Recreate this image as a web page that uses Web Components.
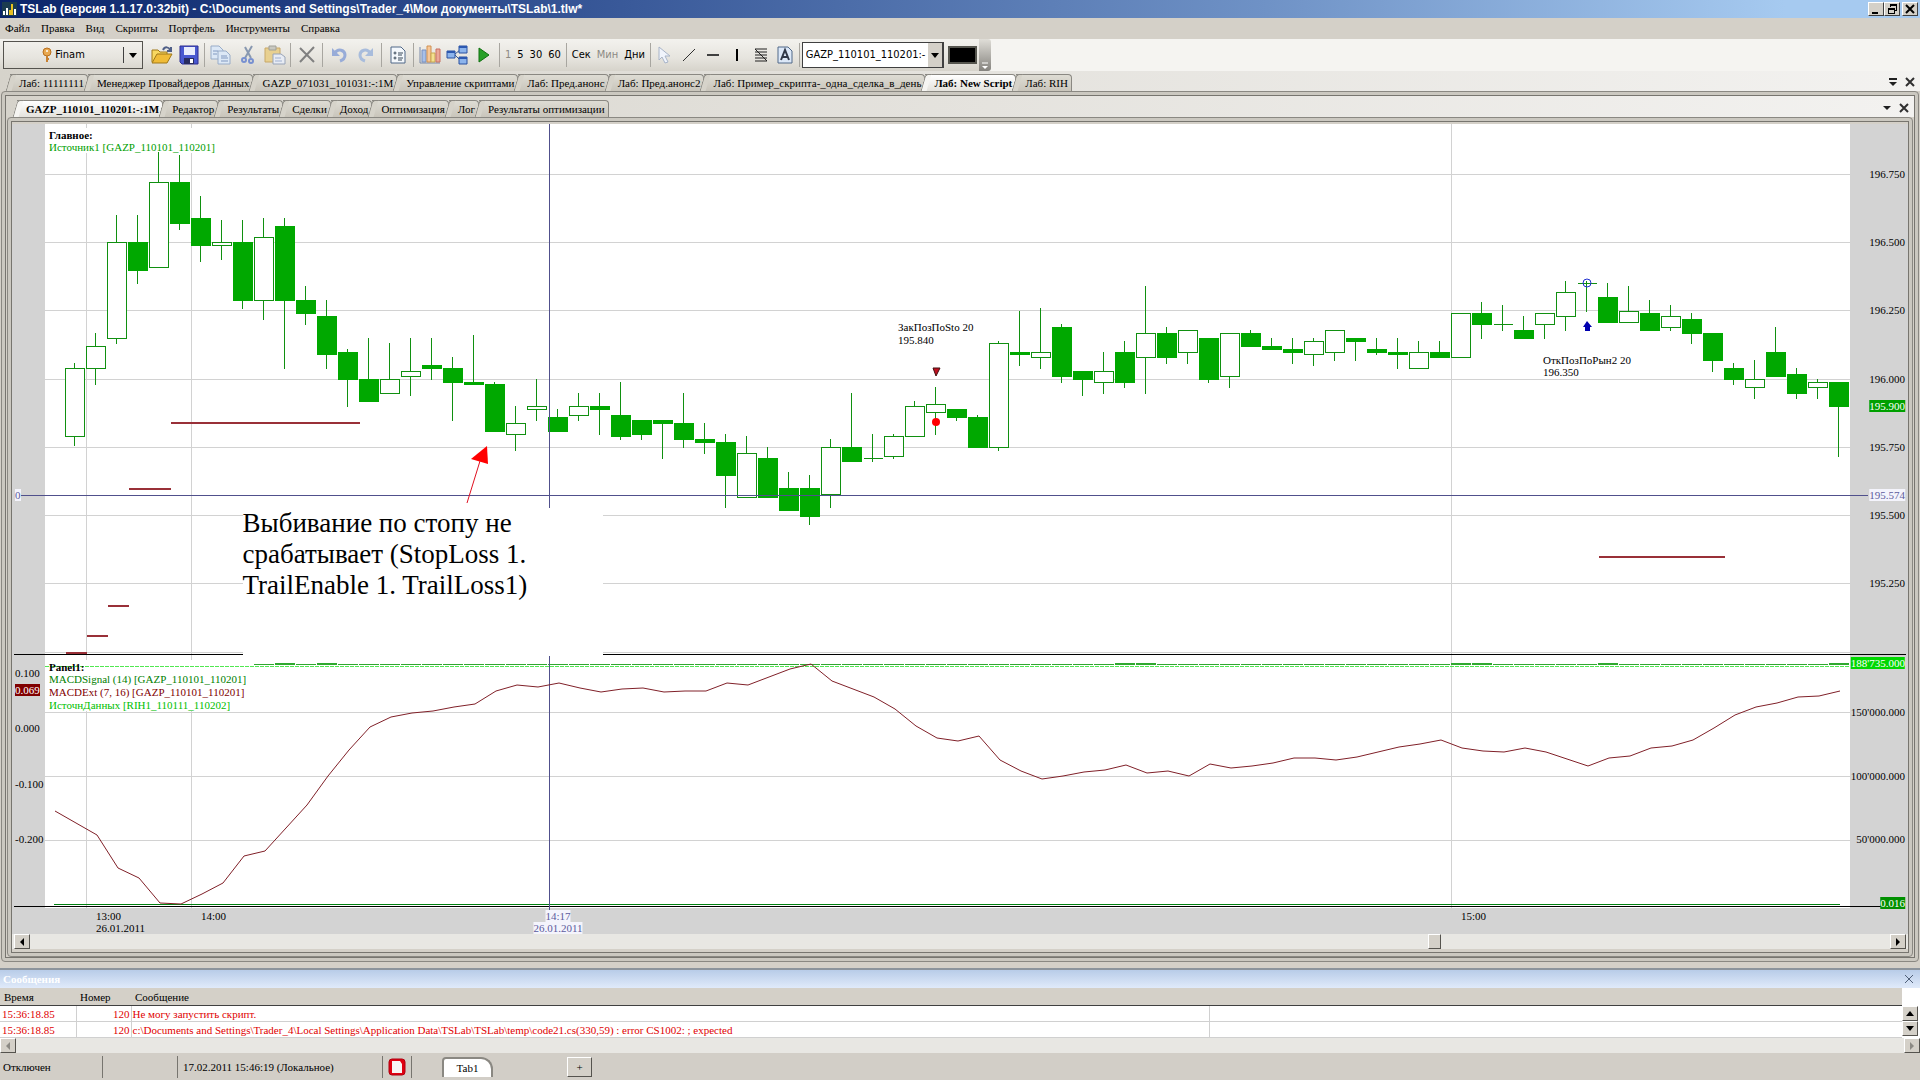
<!DOCTYPE html>
<html lang="ru">
<head>
<meta charset="utf-8">
<title>TSLab</title>
<style>
	html, body {
		margin: 0;
		height: 100%;
	}
	body {
		font-family: "Liberation Serif", serif;
		font-size:   11px;
		line-height: 12px;
		color:       #000;
		--face:      #d4d0c8;
		--line:      #8a8882;
		--ui:        "DejaVu Sans Condensed", "DejaVu Sans", sans-serif;
	}
</style>
</head>
<body>
<ts-app></ts-app>

<script>
(function ()
{
	function define( name, render )
	{
		customElements.define( name, class extends HTMLElement
		{
			constructor()
			{
				super();

				this.attachShadow({ mode: 'open' });
			}

			connectedCallback()
			{
				this.shadowRoot.innerHTML = render( this );
			}
		});
	}

	/* ---- title bar ---- */

	define( 'ts-title-bar', () =>
	`
	<style>
		:host {
			display:     flex;
			align-items: center;
			height:      18px;
			padding:     0 2px;
			background:  linear-gradient( 90deg, #0a246a 0, #3a5a9a 33%, #6f92c6 66%, #a6caf0 93% );
			color:       #fff;
			font:        bold 12px/18px "Liberation Sans", sans-serif;
		}
		h1 {
			flex:        1;
			margin:      0 0 0 3px;
			font:        inherit;
			white-space: nowrap;
		}
		button {
			width:      16px;
			height:     14px;
			padding:    0;
			border:     1px solid;
			border-color: #fff #404040 #404040 #fff;
			background: var( --face );
		}
		button:last-child { margin-left: 2px; }
		svg { display: block; }
	</style>
	<svg width="15" height="14" shape-rendering="crispEdges">
		<rect width="15" height="14" fill="#1c3c50"/>
		<path d="M2 9v4M5 6v7M13 7v6" stroke="#fff" stroke-width="2"/>
		<path d="M8 8v5M10 2v11" stroke="#e8c020" stroke-width="2"/>
	</svg>
	<h1><slot></slot></h1>
	<button aria-label="Свернуть"><svg width="14" height="12"><path d="M3 9h6v2H3z"/></svg></button>
	<button aria-label="Восстановить"><svg width="14" height="12" fill="none" stroke="#000" shape-rendering="crispEdges"><path d="M5 4V1h6v6H9M5 2h6M3 5h6v5H3zM3 6h6"/></svg></button>
	<button aria-label="Закрыть"><svg width="14" height="12"><path d="M3 2l8 8M11 2l-8 8" stroke="#000" stroke-width="2"/></svg></button>
	` );

	/* ---- menu bar ---- */

	define( 'ts-menu-bar', () =>
	`
	<style>
		:host { display: block; background: var( --face ); }
		nav {
			display:     flex;
			gap:         11px;
			height:      19px;
			padding:     0 5px 2px;
			align-items: center;
		}
		a { color: #000; text-decoration: none; white-space: nowrap; }
	</style>
	<nav>
		${ [ 'Файл', 'Правка', 'Вид', 'Скрипты', 'Портфель', 'Инструменты', 'Справка' ]
			.map( item => `<a href="#">${ item }</a>` ).join( '' ) }
	</nav>
	` );

	/* ---- toolbar ---- */

	const icons =
	{
		key:    [ 10, 16, '<circle cx="5" cy="5" r="4" fill="#e8a850" stroke="#b87020"/><circle cx="5" cy="4" r="1" fill="#fff"/><path d="M5 9v6M5 12h2" stroke="#c88030" stroke-width="2"/>' ],
		open:   [ 22, 20, '<path d="M1 17V5h6l2 2h7v3" fill="#f8d860" stroke="#a07818"/><path d="M1 18L6 9h15l-5 9z" fill="#f0bc38" stroke="#a07818"/><path d="M12 5c2-4 6-3 7 0M20 2v4h-4" fill="none" stroke="#506088" stroke-width="2"/>' ],
		save:   [ 20, 20, '<path d="M1 1h18v18H3l-2-2z" fill="#4858d0" stroke="#2c2c90"/><path d="M5 2h11v8H5z" fill="#e8ecfc"/><path d="M5 13h10v6H5z" fill="#282c60"/><path d="M11 14h3v4h-3z" fill="#fff"/>' ],
		copy:   [ 22, 20, '<g stroke="#98acc8" fill="#dce8f6"><path d="M1 1h8l4 4v9H1z"/><path d="M8 6h8l4 4v9H8z"/></g><path d="M3 6h5M3 9h4M11 11h6M11 13h7M11 16h7" stroke="#8098c0"/>' ],
		cut:    [ 16, 20, '<path d="M12 1L5 13M5 2l6 11" stroke="#8898b0" stroke-width="2"/><g fill="none" stroke="#7890d0" stroke-width="2"><circle cx="4" cy="15" r="2"/><circle cx="11" cy="16" r="2"/></g>' ],
		paste:  [ 22, 20, '<path d="M1 3h15v14H1z" fill="#e8d090" stroke="#c8a868"/><path d="M5 1h7v4H5z" fill="#c8c8c0" stroke="#a0a098"/><path d="M9 9h8l4 3v7H9z" fill="#e8ecf4" stroke="#98a4b8"/><path d="M11 13h6M11 16h7" stroke="#a0b0d0"/>' ],
		remove: [ 18, 18, '<path d="M2 2l14 14M16 1L2 16" stroke="#808080" stroke-width="2"/>' ],
		undo:   [ 18, 16, '<path d="M2 1v8h8z" fill="#98acd8"/><path d="M5 6c3-5 10-3 10 2 0 3-2 5-5 6" fill="none" stroke="#98acd8" stroke-width="3"/>' ],
		redo:   [ 18, 16, '<path d="M16 1v8H8z" fill="#a8bcdc"/><path d="M13 6C10 1 3 3 3 8c0 3 2 5 5 6" fill="none" stroke="#a8bcdc" stroke-width="3"/>' ],
		props:  [ 16, 18, '<path d="M1 1h10l4 4v12H1z" fill="#f4f8fc" stroke="#506888"/><g fill="none" stroke="#384858"><circle cx="5" cy="7" r="1"/><circle cx="5" cy="12" r="1"/><path d="M8 7h5M8 12h5M8 9h4M8 14h4"/></g>' ],
		bars:   [ 22, 20, '<path d="M1 2v16h20" fill="none" stroke="#7888a8"/><path d="M3 5h4v12H3z" fill="#a8c0e8" stroke="#7890c0"/><path d="M8 1h4v16H8z" fill="#f8c898" stroke="#d09050"/><path d="M12 8h4v9h-4z" fill="#f4e090" stroke="#c8a850"/><path d="M17 4h4v13h-4z" fill="#eca898" stroke="#c87060"/>' ],
		flow:   [ 22, 20, '<path d="M9 9l5-4M9 10l5 5" stroke="#385890"/><g fill="#8cb4ec" stroke="#2850a0"><path d="M1 6h8v7H1zM13 1h8v7h-8zM13 12h8v7h-8z"/></g><path d="M1 7h8M13 2h8M13 13h8" stroke="#2c58b0" stroke-width="2"/>' ],
		play:   [ 12, 16, '<path d="M1 1l10 7-10 7z" fill="#28a028" stroke="#107010"/>' ],
		cursor: [ 14, 18, '<path d="M1 1v13l3-3 3 6 3-1-3-6h5z" fill="#f0f4fc" stroke="#a8b4c8"/>' ],
		line:   [ 14, 14, '<path d="M1 13L13 1" stroke="#303030"/>' ],
		horiz:  [ 14, 14, '<path d="M1 7h12" stroke="#404040" stroke-width="2"/>' ],
		vert:   [ 4, 14, '<path d="M2 1v12" stroke="#000" stroke-width="2"/>' ],
		fibo:   [ 14, 16, '<path d="M1 2h12M1 5h12M1 8h12M1 11h12M1 14h12M1 2l12 12" stroke="#202020"/>' ],
		text:   [ 16, 18, '<path d="M1 1h10l4 4v12H1z" fill="#dce8f8" stroke="#506888"/><path d="M4 14L8 4l4 10M5 11h6" fill="none" stroke="#303848" stroke-width="2"/>' ],
	};

	function insertIcon( name )
	{
		const [ width, height, shapes ] = icons[ name ];

		return `<svg width="${ width }" height="${ height }" viewBox="0 0 ${ width } ${ height }">${ shapes }</svg>`;
	}

	function insertTools( names, style = '' )
	{
		return names.split( ' ' ).map( name => name === '|'
			? '<i></i>'
			: `<button class="Tool ${ style }" aria-label="${ name }">${ insertIcon( name ) }</button>` ).join( '' );
	}

	define( 'ts-toolbar', () =>
	`
	<style>
		:host {
			display:    flex;
			height:     32px;
			background: #f5f4f1;
			font:       11px/14px var( --ui );
		}
		.Bar {
			display:     flex;
			align-items: center;
			padding:     0 2px 0 3px;
			background:  linear-gradient( #f3f2ee, #e6e4de 60%, #d6d3cb );
		}
		button {
			padding:    0;
			border:     0;
			background: none;
			font:       inherit;
			color:      #000;
		}
		svg { display: block; }
		i {
			width:      1px;
			height:     24px;
			margin:     0 2px;
			background: #a8a6a0;
		}
		.Account {
			display:      flex;
			align-items:  center;
			width:        140px;
			height:       28px;
			margin-right: 5px;
			border:       1px solid #55534e;
		}
		.Account span { display: flex; flex: 1; gap: 3px; align-items: center; justify-content: center; }
		.Account b    { height: 16px; padding: 6px 5px 0; border-left: 1px solid #404040; box-sizing: border-box; }
		.Tool {
			display:         grid;
			place-items:     center;
			min-width:       22px;
			height:          24px;
			margin:          0 2px 0 3px;
		}
		.Tool.draw { min-width: 19px; }
		.Period { padding: 0 3px; }
		.off    { color: #8c8a84; }
		.Combo {
			position: relative;
			width:    142px;
			height:   26px;
			border:   1px solid #404040;
			box-sizing: border-box;
			background: #fff;
		}
		select {
			appearance: none;
			width:      124px;
			height:     24px;
			padding:    0 0 0 3px;
			border:     0;
			background: none;
			font:       inherit;
			overflow:   hidden;
		}
		.Combo b {
			position:       absolute;
			inset:          0 0 0 auto;
			width:          15px;
			display:        grid;
			place-items:    center;
			background:     var( --face );
			border-right:   1px solid #404040;
			pointer-events: none;
			box-sizing:     border-box;
		}
		.Color {
			width:        29px;
			height:       18px;
			margin-left:  4px;
			border:       2px solid #55554e;
			background:   #000;
		}
		.Grip {
			width:         12px;
			border-radius: 0 3px 3px 0;
			background:    linear-gradient( #e0ded8, #85837e );
			display:       flex;
			align-items:   end;
			justify-content: center;
		}
	</style>
	<div class="Bar">
		<button class="Account"><span>${ insertIcon( 'key' ) }Finam</span><b><svg width="8" height="5"><path d="M0 0h8L4 5z"/></svg></b></button>
		${ insertTools( 'open save | copy cut paste | remove | undo redo | props | bars flow play |' ) }
		<button class="Period off">1</button><button class="Period">5</button><button class="Period">30</button><button class="Period">60</button>
		<i></i>
		<button class="Period">Сек</button><button class="Period off">Мин</button><button class="Period">Дни</button>
		<i></i>
		${ insertTools( 'cursor line horiz vert fibo text |', 'draw' ) }
		<label class="Combo">
			<select aria-label="Инструмент"><option>GAZP_110101_110201:-</option></select>
			<b><svg width="8" height="5"><path d="M0 0h8L4 5z"/></svg></b>
		</label>
		<button class="Color" aria-label="Цвет"></button>
	</div>
	<button class="Grip" aria-label="Ещё"><svg width="8" height="10"><path d="M1 2h6" stroke="#fff"/><path d="M1 5h6L4 8z" fill="#fff"/></svg></button>
	` );

	/* ---- tabs ---- */

	define( 'ts-tab', host =>
	`
	<style>
		:host { display: block; }
		button {
			position:      relative;
			display:       block;
			height:        17px;
			margin:        0;
			padding:       0 3px 1px 9px;
			border:        1px solid var( --line );
			border-width:  1px 1px 0 0;
			border-radius: 0 4px 0 0;
			background:    linear-gradient( #dedcd4, #c9c5bb );
			color:         #000;
			font:          11px/14px "Liberation Serif", serif;
			white-space:   nowrap;
		}
		button::before {
			content:       "";
			position:      absolute;
			left:          -2px;
			top:           -1px;
			width:         6px;
			height:        17px;
			box-sizing:    border-box;
			border:        1px solid var( --line );
			border-width:  1px 0 0 1px;
			border-radius: 3px 0 0 0;
			background:    #d6d3ca;
			transform:     skewX( -16deg );
		}
		:host([selected]) button         { background: linear-gradient( #fff, #e4e2dc ); font-weight: bold; }
		:host([selected]) button::before { background: #f6f5f2; }
	</style>
	<button role="tab" aria-selected="${ host.hasAttribute( 'selected' ) }"><slot></slot></button>
	` );

	define( 'ts-tab-strip', host =>
	`
	<style>
		:host {
			display:     flex;
			align-items: end;
			background:  linear-gradient( 90deg, #d6d3cb, #f3f2f0 );
		}
		.Tabs { display: flex; flex: 1; }
		button { padding: 0; border: 0; margin: 0 5px 4px 2px; background: none; }
		svg { display: block; }
	</style>
	<div class="Tabs" role="tablist"><slot></slot></div>
	<button aria-label="Список"><svg width="10" height="10">${ host.hasAttribute( 'overflow' )
		? '<path d="M1 1h8v2H1zM1 5h8L5 9z" fill="#202020"/>'
		: '<path d="M1 3h8L5 7z" fill="#202020"/>' }</svg></button>
	<button aria-label="Закрыть"><svg width="10" height="10"><path d="M1 1l8 8M9 1L1 9" stroke="#303030" stroke-width="2"/></svg></button>
	` );

	define( 'ts-frame', () =>
	`
	<style>
		:host {
			display:        flex;
			flex-direction: column;
			flex:           1;
			margin:         0 1px;
			padding:        3px;
			border:         1px solid var( --line );
			border-radius:  4px;
			background:     #cbc8c0;
		}
		div {
			display:        flex;
			flex-direction: column;
			flex:           1;
			border:         1px solid #77756f;
			background:     var( --face );
		}
	</style>
	<div><slot></slot></div>
	` );

	/* ---- scrollbar ---- */

	define( 'ts-scrollbar', host =>
	`
	<style>
		:host { display: flex; background: #e8e7e3; }
		button {
			display:      grid;
			place-items:  center;
			width:        16px;
			height:       15px;
			padding:      0;
			border:       1px solid;
			border-color: #fff #55534e #55534e #fff;
			background:   var( --face );
		}
		button:disabled path { fill: #8c8a84; }
		input {
			appearance: none;
			flex:       1;
			min-width:  0;
			height:     15px;
			margin:     0;
			background: none;
		}
		input::-webkit-slider-thumb {
			appearance:   none;
			width:        13px;
			height:       15px;
			border:       1px solid;
			border-color: #fff #55534e #55534e #fff;
			background:   var( --face );
			box-sizing:   border-box;
		}
		:host([disabled]) input { visibility: hidden; }
	</style>
	<button aria-label="Влево" ${ host.hasAttribute( 'disabled' ) ? 'disabled' : '' }><svg width="6" height="8"><path d="M5 0v8L1 4z"/></svg></button>
	<input type="range" aria-label="Прокрутка" min="0" max="1000" value="${ host.getAttribute( 'value' ) || 0 }">
	<button aria-label="Вправо" ${ host.hasAttribute( 'disabled' ) ? 'disabled' : '' }><svg width="6" height="8"><path d="M1 0v8l4-4z"/></svg></button>
	` );

	/* ---- chart ---- */

	// Drawing area: left, top, width, height
	const view = [ 12, 124, 1896, 810 ];

	// high, body top, body bottom, low in hundredths over 195; 1 = falling bar
	const candles =
	[
		[106,104,79,76,0], [117,112,104,98,0], [160,150,115,113,0], [160,150,140,135,1],
		[183,172,141,141,0], [182,172,157,155,1], [167,159,149,143,1], [158,150,149,144,0],
		[158,150,129,126,1], [159,152,129,122,0], [159,156,129,104,1], [134,129,124,120,1],
		[129,123,109,104,1], [111,110,100,90,1], [115,100,92,92,1], [113,100,95,95,0],
		[115,103,101,94,0], [115,105,104,100,1], [108,104,99,85,1], [116,99,98,98,1],
		[99,98,81,81,1], [90,84,80,74,0], [100,90,89,85,0], [89,86,81,81,1],
		[95,90,87,85,0], [95,90,89,80,1], [99,87,79,78,1], [85,85,80,78,1],
		[85,85,84,71,1], [95,84,78,75,1], [84,78,77,73,1], [80,77,65,53,1],
		[79,73,57,57,0], [75,71,57,57,1], [66,60,52,52,1], [65,60,50,47,1],
		[78,75,58,53,0], [95,75,70,70,1], [80,71,71,70,0], [80,79,72,71,0],
		[92,90,79,79,0], [97,91,88,80,0], [89,89,86,85,1], [87,86,75,75,1],
		[114,113,75,74,0], [125,110,109,105,1], [126,110,108,104,0], [120,119,101,99,1],
		[103,103,100,94,1], [110,103,99,95,0], [114,110,99,97,1], [134,117,108,95,0],
		[119,117,108,106,1], [118,118,110,106,0], [115,115,100,99,1], [117,117,101,97,0],
		[118,117,112,112,1], [115,112,111,111,1], [115,111,110,106,1], [115,114,109,105,0],
		[118,118,110,107,0], [115,115,114,107,1], [115,111,110,109,1], [115,110,109,104,1],
		[114,110,104,104,0], [114,110,108,108,1], [124,124,108,108,0], [128,124,120,115,1],
		[127,120,120,118,0], [123,118,115,115,1], [124,124,120,115,0], [136,132,123,118,0],
		[136,135,135,125,0], [135,130,121,121,1], [134,125,121,121,0], [129,124,118,118,1],
		[127,123,119,118,0], [124,122,117,113,1], [117,117,107,103,1], [106,104,100,98,1],
		[107,100,97,93,0], [119,110,101,101,1], [104,102,95,93,1], [100,99,97,93,0],
		[99,99,90,72,1],
	];

	// MACD curve, one point per bar, starting one bar before the first candle
	const macd =
	[
		811,823,835,868,878,903,904,894,883,856,851,828,805,776,750,727,717,713,711,707,704,
		691,685,687,683,688,692,689,688,692,691,691,683,685,677,669,664,681,689,697,709,726,
		738,741,736,760,771,779,776,772,770,765,773,771,776,764,768,766,763,758,758,760,757,
		752,747,744,740,748,751,752,748,752,759,766,758,756,748,746,740,728,715,707,703,697,
		696,691,
	];

	// stop levels: x1, x2, y
	const stops =
	[
		[66,87,653], [87,108,636], [108,129,606], [129,171,489], [171,360,423], [1599,1725,557],
	];

	// axis labels: x, y, text, class
	const labels =
	[
		[1905,174,'196.750','right'], [1905,242,'196.500','right'], [1905,310,'196.250','right'],
		[1905,379,'196.000','right'], [1905,406,'195.900','right last'], [1905,447,'195.750','right'],
		[1905,495,'195.574','right cross'], [1905,515,'195.500','right'], [1905,583,'195.250','right'],
		[1905,663,"188'735.000",'right source'], [1905,712,"150'000.000",'right'],
		[1905,776,"100'000.000",'right'], [1905,839,"50'000.000",'right'], [1905,903,'0.016','right signal'],
		[15,495,'0','cross'], [15,673,'0.100',''], [15,690,'0.069','macd'], [15,728,'0.000',''],
		[15,784,'-0.100',''], [15,839,'-0.200',''],
		[96,916,'13:00',''], [96,928,'26.01.2011',''], [201,916,'14:00',''], [1461,916,'15:00',''],
		[558,916,'14:17','center cross'], [558,928,'26.01.2011','center cross'],
		[49,135,'<b>Главное:</b>',''], [49,147,'Источник1 [GAZP_110101_110201]','green'],
		[49,667,'<b>Panel1:</b>',''], [49,679,'MACDSignal (14) [GAZP_110101_110201]','darkgreen'],
		[49,692,'MACDExt (7, 16) [GAZP_110101_110201]','darkred'],
		[49,705,'ИсточнДанных [RIH1_110111_110202]','lime'],
		[898,327,'ЗакПозПоSto 20',''], [898,340,'195.840',''],
		[1543,360,'ОткПозПоРын2 20',''], [1543,372,'196.350',''],
	];

	const barX   = index => 74 + index * 21;
	const priceY = price => Math.round( 379 - ( price - 100 ) * 2.733 );

	function insertCandles()
	{
		return candles.map(([ high, top, bottom, low, falling ], index ) =>
		{
			const x  = barX( index );
			const y1 = priceY( top );
			const y2 = priceY( bottom );
			const body = falling
				? `<path d="M${ x - 9 } ${ y1 }h20v${ y2 - y1 + 1 }h-20z" fill="#00a800" stroke="none"/>`
				: `<path d="M${ x - 9 }.5 ${ y1 }.5h19v${ y2 - y1 }h-19z" fill="#fff"/>`;

			return `<path d="M${ x }.5 ${ priceY( high ) }V${ y1 }M${ x }.5 ${ y2 }V${ priceY( low ) + 1 }"/>${ body }`;
		}).join( '' );
	}

	function insertGrid()
	{
		const rows = [ 174, 242, 310, 379, 447, 515, 583, 652, 712, 776, 840 ]
			.map( y => `M45 ${ y }.5H1850` );
		const columns = [ 86, 191, 1451 ]
			.map( x => `M${ x }.5 124V911` );

		return `<path d="${ rows.join( '' ) }${ columns.join( '' ) }" stroke="#d2d2d2"/>`;
	}

	function insertSource()
	{
		const thick = [ 275, 317, 1115, 1136, 1451, 1472, 1598, 1829 ];
		let path = '';

		for ( let x = 254; x < 1849; x += 21 )
		{
			const end = Math.min( x + 20, 1850 );

			path += `M${ x } 664.5H${ end }`;
			if ( thick.some( start => Math.abs( start - x ) < 10 )) path += `M${ x } 663.5H${ end }`;
		}

		return `
			<path d="${ path }" stroke="#30a830"/>
			<path d="M45 666.5H1850" stroke="#50e850" stroke-dasharray="4 1"/>`;
	}

	function insertDrawing()
	{
		const curve = macd.map(( y, index ) => `${ barX( index - 1 ) + 2 },${ y }` ).join( ' ' );
		const levels = stops.map(([ x1, x2, y ]) => `M${ x1 } ${ y }H${ x2 }` ).join( '' );

		return `
		<svg class="Drawing" viewBox="${ view.join( ' ' ) }" preserveAspectRatio="none" fill="none">
			<rect x="12" y="124" width="1896" height="810" fill="#d3d3d3"/>
			<rect x="45" y="124" width="1805" height="784" fill="#fff"/>
			<g shape-rendering="crispEdges">
				${ insertGrid() }
				<path d="M46 128H216V153H46zM46 660H248V711H46z" fill="#fff"/>
				<path d="${ levels }" stroke="#993038" stroke-width="2"/>
				<g stroke="#109010">${ insertCandles() }</g>
				${ insertSource() }
				<path d="M54 904.5H1840" stroke="#008010"/>
				<path d="M14 654.5H1906M14 906.5H1882" stroke="#000"/>
				<path d="M20 495.5H1868M549.5 124V911" stroke="#50508c"/>
				<path d="M243 508H603V656H243z" fill="#fff"/>
			</g>
			<polyline points="${ curve }" stroke="#802028" stroke-width="1"/>
			<path d="M467 503L480 461" stroke="#e01020"/>
			<path d="M487 446L471 459 488 464z" fill="#f00"/>
			<path d="M933 368H940L936 376z" fill="#c01020" stroke="#401010"/>
			<circle cx="936" cy="422" r="4" fill="#f00"/>
			<circle cx="1587" cy="283" r="4" stroke="#2030d0"/>
			<path d="M1587 321L1592 327H1590V331H1585V327H1583z" fill="#0000b0"/>
		</svg>`;
	}

	function insertLabels()
	{
		return labels.map(([ x, y, text, style ]) =>
		{
			const left = ( x - view[0] ) / view[2] * 100;
			const top  = ( y - view[1] ) / view[3] * 100;

			return `<span class="Label ${ style }" style="left:${ left }%;top:${ top }%">${ text }</span>`;
		}).join( '' );
	}

	define( 'ts-chart', () =>
	`
	<style>
		:host {
			display:    block;
			position:   relative;
			flex:       1;
			min-height: 400px;
			overflow:   hidden;
		}
		.Drawing {
			position: absolute;
			width:    100%;
			height:   100%;
		}
		.Label {
			position:    absolute;
			margin-top:  -6px;
			white-space: nowrap;
		}
		.right     { transform: translateX( -100% ); }
		.center    { transform: translateX( -50% ); }
		.green     { color: #00a000; }
		.darkgreen { color: #008000; }
		.darkred   { color: #800000; }
		.lime      { color: #00c000; }
		.cross     { color: #5c5c9c; background: #f4f4fc; }
		.last      { color: #fff; background: #00a000; }
		.source    { color: #fff; background: #00d800; }
		.signal    { color: #fff; background: #009000; }
		.macd      { color: #fff; background: #800000; }
		.Note {
			position:  absolute;
			left:      12%;
			top:       47%;
			width:     340px;
			margin:    0;
			padding:   3px;
			font-size: 27px;
			line-height: 31px;
		}
	</style>
	${ insertDrawing() }
	${ insertLabels() }
	<p class="Note">Выбивание по стопу не<br>срабатывает (StopLoss 1.<br>TrailEnable 1. TrailLoss1)</p>
	` );

	/* ---- messages ---- */

	define( 'ts-messages', () =>
	`
	<style>
		:host {
			display:    block;
			margin-top: 6px;
			border-top: 2px solid #8c949c;
		}
		header {
			display:         flex;
			align-items:     center;
			justify-content: space-between;
			height:          18px;
			padding:         0 6px 0 3px;
			background:      linear-gradient( #b8cce8, #e0eafa );
		}
		h2 { margin: 0; font-size: 11px; color: #fff; }
		button { display: grid; place-items: center; padding: 0; border: 0; background: none; }
		.Body { display: flex; background: #fff; }
		table { flex: 1; border-collapse: collapse; table-layout: fixed; color: #e00000; }
		th {
			height:        17px;
			padding:       0 4px;
			border-bottom: 1px solid #404040;
			background:    var( --face );
			color:         #000;
			font-weight:   normal;
			text-align:    left;
		}
		td { height: 15px; padding: 0 2px; border-bottom: 1px solid #d0d0d0; border-right: 1px solid #d0d0d0; white-space: nowrap; }
		td:nth-child( 2 ) { text-align: right; padding-right: 1px; }
		td:nth-child( 3 ) { padding-left: 1px; }
		td:last-child { border-right: 0; }
		.Scroll { width: 18px; padding-top: 18px; }
		.Scroll button {
			width:        16px;
			height:       15px;
			border:       1px solid;
			border-color: #fff #55534e #55534e #fff;
			background:   var( --face );
		}
	</style>
	<header><h2>Сообщения</h2><button aria-label="Закрыть"><svg width="10" height="10"><path d="M1 1l8 8M9 1L1 9" stroke="#506078"/></svg></button></header>
	<div class="Body">
		<table>
			<colgroup><col style="width:76px"><col style="width:55px"><col style="width:1078px"><col></colgroup>
			<thead><tr><th>Время</th><th>Номер</th><th>Сообщение</th><th></th></tr></thead>
			<tbody>
				<tr><td>15:36:18.85</td><td>120</td><td>Не могу запустить скрипт.</td><td></td></tr>
				<tr><td>15:36:18.85</td><td>120</td><td>c:\\Documents and Settings\\Trader_4\\Local Settings\\Application Data\\TSLab\\TSLab\\temp\\code21.cs(330,59) : error CS1002: ; expected</td><td></td></tr>
			</tbody>
		</table>
		<div class="Scroll">
			<button aria-label="Вверх"><svg width="8" height="5"><path d="M0 5h8L4 0z"/></svg></button>
			<button aria-label="Вниз"><svg width="8" height="5"><path d="M0 0h8L4 5z"/></svg></button>
		</div>
	</div>
	<ts-scrollbar disabled></ts-scrollbar>
	` );

	/* ---- status bar ---- */

	define( 'ts-status-bar', () =>
	`
	<style>
		:host {
			display:     flex;
			align-items: center;
			height:      27px;
			background:  #d2cec7;
		}
		span { box-sizing: border-box; height: 22px; line-height: 22px; border-right: 1px solid #77756f; white-space: nowrap; }
		.State { width: 103px; padding-left: 3px; }
		.Blank { width: 75px; }
		.Clock { width: 205px; padding-left: 5px; }
		.Stop  { width: 29px; padding: 2px 5px; }
		svg    { display: block; }
		button { border: 0; color: #000; font: inherit; }
		.Tab {
			width:         51px;
			height:        20px;
			margin-left:   30px;
			border:        2px solid #8a8882;
			border-bottom: 0;
			border-radius: 4px 12px 0 0;
			background:    #fff;
		}
		.Add {
			width:        25px;
			height:       20px;
			margin-left:  74px;
			padding:      0;
			border:       1px solid;
			border-color: #fff #55534e #55534e #fff;
			background:   var( --face );
		}
	</style>
	<span class="State">Отключен</span>
	<span class="Blank"></span>
	<span class="Clock">17.02.2011 15:46:19 (Локальное)</span>
	<span class="Stop"><svg width="18" height="18"><rect x="1" y="1" width="16" height="16" rx="3" fill="#e00010" stroke="#b00010"/><path d="M4 3h8l2 3v9H4z" fill="#f8f4f4"/></svg></span>
	<button class="Tab">Tab1</button>
	<button class="Add">+</button>
	` );

	/* ---- application ---- */

	define( 'ts-app', () =>
	`
	<style>
		:host {
			display:        flex;
			flex-direction: column;
			min-height:     100vh;
			background:     var( --face );
		}
		.Main     { height: 20px; padding-left: 10px; }
		.Views    { height: 21px; padding-left: 11px; }
		.Work     { flex: 1; }
		.Plot     { flex: 1; display: flex; flex-direction: column; padding: 2px 0 3px; }
		.Plot ts-scrollbar { padding: 0 2px; }
	</style>
	<ts-title-bar>TSLab (версия 1.1.17.0:32bit) - C:\\Documents and Settings\\Trader_4\\Мои документы\\TSLab\\1.tlw*</ts-title-bar>
	<ts-menu-bar></ts-menu-bar>
	<ts-toolbar></ts-toolbar>
	<ts-tab-strip class="Main" overflow>
		<ts-tab>Лаб: 11111111</ts-tab>
		<ts-tab>Менеджер Провайдеров Данных</ts-tab>
		<ts-tab>GAZP_071031_101031:-:1M</ts-tab>
		<ts-tab>Управление скриптами</ts-tab>
		<ts-tab>Лаб: Пред.анонс</ts-tab>
		<ts-tab>Лаб: Пред.анонс2</ts-tab>
		<ts-tab>Лаб: Пример_скрипта-_одна_сделка_в_день</ts-tab>
		<ts-tab selected>Лаб: New Script</ts-tab>
		<ts-tab>Лаб: RIH</ts-tab>
	</ts-tab-strip>
	<ts-frame class="Work">
		<ts-tab-strip class="Views">
			<ts-tab selected>GAZP_110101_110201:-:1M</ts-tab>
			<ts-tab>Редактор</ts-tab>
			<ts-tab>Результаты</ts-tab>
			<ts-tab>Сделки</ts-tab>
			<ts-tab>Доход</ts-tab>
			<ts-tab>Оптимизация</ts-tab>
			<ts-tab>Лог</ts-tab>
			<ts-tab>Результаты оптимизации</ts-tab>
		</ts-tab-strip>
		<ts-frame>
			<div class="Plot">
				<ts-chart></ts-chart>
				<ts-scrollbar value="757"></ts-scrollbar>
			</div>
		</ts-frame>
	</ts-frame>
	<ts-messages></ts-messages>
	<ts-status-bar></ts-status-bar>
	` );
})();
</script>
</body>
</html>
